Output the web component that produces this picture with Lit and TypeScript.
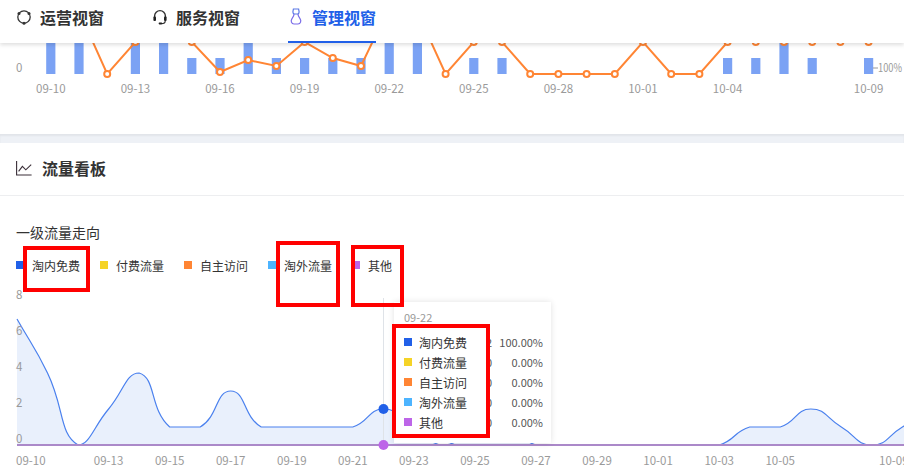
import { LitElement, html, css, svg } from "lit";
import { customElement } from "lit/decorators.js";

const topBars = [2, 2, 0, 2, 2, 1, 1, 2, 1, 1, 1, 1, 2, 2, 0, 1, 1, 0, 0, 0, 0, 0, 0, 0, 1, 1, 2, 1, 0, 1];
const topLine = [-40, 11, 74, 42, -20, 42, 72, 60, 66, 42, 58, 66, 7, 12, 74, 42, 42, 74, 74, 74, 74, 42, 74, 74, 42, 42, 42, 42, 42, 42];
const topLabels: [number, string][] = [[0, "09-10"], [3, "09-13"], [6, "09-16"], [9, "09-19"], [12, "09-22"], [15, "09-25"], [18, "09-28"], [21, "10-01"], [24, "10-04"], [29, "10-09"]];
const tx = (i: number) => 50.8 + 28.2 * i;

const flow = [7, 4, 0, 2, 4, 1, 1, 3, 1, 1, 1, 1, 2, 1, 0, 1, 1, 0, 0, 0, 0, 0, 0, 0, 1, 1, 2, 1, 0, 1, 2];
const fx = (i: number) => 17 + 30.53 * i;
const fy = (v: number) => 445 - 18 * v;
const bottomLabels: [number, string][] = [[3, "09-13"], [5, "09-15"], [7, "09-17"], [9, "09-19"], [11, "09-21"], [13, "09-23"], [15, "09-25"], [17, "09-27"], [19, "09-29"], [21, "10-01"], [23, "10-03"], [25, "10-05"]];

function smoothPath(pts: [number, number][]): string {
  const s = 0.5;
  let d = `M${pts[0][0]} ${pts[0][1]}`;
  const nextCp: [number, number][] = [];
  const prevCp: [number, number][] = [];
  pts.forEach((p, i) => {
    const a = pts[Math.max(i - 1, 0)];
    const b = pts[Math.min(i + 1, pts.length - 1)];
    const vx = b[0] - a[0];
    const vy = b[1] - a[1];
    const lp = Math.hypot(p[0] - a[0], p[1] - a[1]);
    const ln = Math.hypot(b[0] - p[0], b[1] - p[1]);
    const r = lp + ln === 0 ? 0.5 : ln / (lp + ln);
    const clamp = (y: number, o: [number, number]) => Math.max(Math.min(y, Math.max(o[1], p[1])), Math.min(o[1], p[1]));
    nextCp[i] = [p[0] + vx * s * r, clamp(p[1] + vy * s * r, b)];
    prevCp[i] = [p[0] - vx * s * (1 - r), clamp(p[1] - vy * s * (1 - r), a)];
  });
  for (let i = 1; i < pts.length; i++) {
    const c1 = nextCp[i - 1];
    const c2 = prevCp[i];
    d += `C${c1[0].toFixed(1)} ${c1[1].toFixed(1)} ${c2[0].toFixed(1)} ${c2[1].toFixed(1)} ${pts[i][0].toFixed(1)} ${pts[i][1].toFixed(1)}`;
  }
  return d;
}

const legend = [
  { name: "淘内免费", color: "#2160e8", value: "2", pct: "100.00%" },
  { name: "付费流量", color: "#f5d327", value: "0", pct: "0.00%" },
  { name: "自主访问", color: "#ff8534", value: "0", pct: "0.00%" },
  { name: "淘外流量", color: "#4db4ff", value: "0", pct: "0.00%" },
  { name: "其他", color: "#bd65e8", value: "0", pct: "0.00%" },
];

const iconOps = html`<svg class="icon" viewBox="0 0 16 16" fill="none">
  <circle cx="8" cy="8" r="6.2" stroke="#333" stroke-width="1.3"></circle>
  <circle cx="13" cy="4.4" r="1.5" fill="#333"></circle>
  <circle cx="3" cy="4.4" r="1.5" fill="#333"></circle>
  <circle cx="8" cy="14.2" r="1.5" fill="#333"></circle>
</svg>`;
const iconService = html`<svg class="icon" viewBox="0 0 16 16" fill="none">
  <path d="M2.6 9V7a5.4 5.4 0 0 1 10.8 0v2" stroke="#333" stroke-width="1.4"></path>
  <rect x="1.4" y="7.6" width="2.6" height="4.4" rx="1" fill="#222"></rect>
  <rect x="12" y="7.6" width="2.6" height="4.4" rx="1" fill="#222"></rect>
  <path d="M13.2 12c0 1.6-1.4 2.6-3.6 2.6" stroke="#333" stroke-width="1.2"></path>
  <rect x="6.6" y="13.6" width="3.6" height="1.8" rx=".8" fill="#222"></rect>
</svg>`;
const iconManage = html`<svg class="icon tall" viewBox="0 0 16 18" fill="none">
  <path d="M5.4 1h5.2l.5 2.8c.1.9-.4 1.8-1.3 2.2H6.200c-.9-.4-1.400-1.300-1.300-2.200z" stroke="#5a78e6" stroke-width="1.200"></path>
  <path d="M6 6c.2 1.600-.8 3-2 4.600-1.600 2.200-.6 5.400 2 5.400h4c2.600 0 3.600-3.200 2-5.400-1.200-1.600-2.200-3-2-4.600" stroke="#7a6ce8" stroke-width="1.200"></path>
</svg>`;

@customElement("app-root")
export class AppRoot extends LitElement {
  static styles = css`
    :host {
      display: block;
      position: relative;
      width: 904px;
      height: 470px;
      overflow: hidden;
      background: #fff;
      font-family: "Noto Sans CJK SC", "Noto Sans", sans-serif;
      color: #333;
    }
    .nav {
      position: relative;
      z-index: 2;
      height: 43px;
      box-sizing: border-box;
      display: flex;
      gap: 48px;
      padding-left: 16px;
      background: #fff;
      box-shadow: 0 2px 4px rgba(0, 0, 0, 0.13);
    }
    .tab {
      width: 88px;
      height: 43px;
      box-sizing: border-box;
      display: flex;
      align-items: center;
      gap: 8px;
      padding-bottom: 9px;
      font-size: 16px;
      font-weight: 700;
      line-height: 20px;
      white-space: nowrap;
      color: #333;
    }
    .tab.active {
      color: #2160e8;
      border-bottom: 2px solid #2160e8;
      padding-bottom: 7px;
    }
    .icon {
      width: 16px;
      height: 16px;
      flex: none;
    }
    .icon.tall {
      height: 18px;
    }
    svg.chart {
      display: block;
      width: 904px;
    }
    .top {
      height: 91px;
    }
    .axis {
      font-family: "Noto Sans CJK SC", "Noto Sans", sans-serif;
      font-size: 11.5px;
      fill: #9a9a9a;
    }
    .band {
      height: 9px;
      background: #eef1f6;
      box-shadow: inset 0 2px 2px rgba(0, 0, 0, 0.05);
    }
    .head {
      height: 53px;
      box-sizing: border-box;
      border-bottom: 1px solid #edeef0;
      padding: 0 0 3px 16px;
      display: flex;
      align-items: center;
      gap: 10px;
      font-size: 16px;
      font-weight: 700;
    }
    .head svg {
      width: 16px;
      height: 16px;
    }
    .sub {
      margin: 27px 0 0 16px;
      height: 18px;
      line-height: 18px;
      font-size: 14px;
      color: #333;
    }
    .legend {
      display: flex;
      margin: 15px 0 0 16px;
      height: 18px;
      align-items: center;
      font-size: 12px;
    }
    .legend .item {
      display: flex;
      align-items: center;
      gap: 8px;
      padding-right: 20px;
    }
    .sq {
      width: 8px;
      height: 8px;
      flex: none;
    }
    .wrap {
      position: relative;
      height: 185px;
      margin-top: 11px;
    }
    .flowchart {
      height: 185px;
    }
    .tip {
      position: absolute;
      left: 394px;
      top: 17px;
      width: 157px;
      height: 141px;
      box-sizing: border-box;
      padding: 6px 8px 0 10px;
      background: #fff;
      box-shadow: 0 0 6px rgba(0, 0, 0, 0.12);
      font-size: 11px;
    }
    .tip .date {
      height: 18px;
      line-height: 18px;
      color: #999;
      margin-bottom: 6px;
    }
    .tip .row {
      height: 20px;
      display: flex;
      align-items: center;
      color: #555;
    }
    .tip .sq {
      margin-right: 7px;
    }
    .tip .name {
      width: 48px;
      font-size: 12px;
      color: #333;
    }
    .tip .val {
      width: 25px;
      text-align: right;
    }
    .tip .pct {
      flex: 1;
      text-align: right;
    }
    .mark {
      position: absolute;
      z-index: 3;
      box-sizing: border-box;
      border: 4px solid #ff0000;
    }
    .m1 { left: 23px; top: 246px; width: 67px; height: 46px; }
    .m2 { left: 276px; top: 241px; width: 64px; height: 66px; }
    .m3 { left: 351px; top: 245px; width: 53px; height: 62px; }
    .m4 { left: 392px; top: 324px; width: 98px; height: 114px; }
  `;

  private topChart() {
    return html`<svg class="chart top" viewBox="0 43 904 91" height="91">
      ${topBars.map((b, i) =>
        b ? svg`<rect x=${tx(i) - 4.6} y=${b === 2 ? 30 : 58} width="9.2" height=${b === 2 ? 44 : 16} fill="#7ba2f4"></rect>` : null
      )}
      <polyline points=${topLine.map((y, i) => `${tx(i)},${y}`).join(" ")} fill="none" stroke="#ff8534" stroke-width="2"></polyline>
      ${topLine.map((y, i) => svg`<circle cx=${tx(i)} cy=${y} r="3" fill="#fff" stroke="#ff8534" stroke-width="2"></circle>`)}
      <text class="axis" x="16" y="72">0</text>
      <line x1="873" x2="878" y1="68" y2="68" stroke="#999"></line>
      <text class="axis" x="878" y="72" textLength="24" lengthAdjust="spacingAndGlyphs">100%</text>
      ${topLabels.map(([i, t]) => svg`<text class="axis" x=${tx(i)} y="93" text-anchor="middle">${t}</text>`)}
    </svg>`;
  }

  private flowChart() {
    const pts = flow.map((v, i) => [fx(i), fy(v)] as [number, number]);
    const line = smoothPath(pts);
    const area = `${line}L${fx(flow.length - 1)} 445L17 445Z`;
    return html`<svg class="chart flowchart" viewBox="0 285 904 185" height="185">
      <path d=${area} fill="#e9f0fc"></path>
      <path d=${line} fill="none" stroke="#4a80ee" stroke-width="1.2"></path>
      <line x1="17" x2="904" y1="445" y2="445" stroke="#ab89c9" stroke-width="2"></line>
      <line x1="383.5" x2="383.5" y1="298" y2="445" stroke="#dfe3e8"></line>
      <circle cx="383.5" cy="409" r="5" fill="#2160e8"></circle>
      <circle cx="383.5" cy="445" r="5" fill="#bd65e8"></circle>
      ${[8, 6, 4, 2, 0].map((v) => svg`<text class="axis" x="16" y=${fy(v) - 2}>${v}</text>`)}
      <text class="axis" x="16" y="465">09-10</text>
      ${bottomLabels.map(([i, t]) => svg`<text class="axis" x=${fx(i)} y="465" text-anchor="middle">${t}</text>`)}
      <text class="axis" x="879" y="465">10-09</text>
    </svg>`;
  }

  render() {
    return html`
      <nav class="nav">
        <div class="tab">${iconOps}<span>运营视窗</span></div>
        <div class="tab">${iconService}<span>服务视窗</span></div>
        <div class="tab active">${iconManage}<span>管理视窗</span></div>
      </nav>
      ${this.topChart()}
      <div class="band"></div>
      <div class="head">
        <svg viewBox="0 0 16 16" fill="none" stroke="#3a2f38" stroke-width="1.1">
          <path d="M.6 1v14h15"></path>
          <path d="M2.6 11.4 6.400 6.400l3.400 3.400 5.400-5.200"></path>
        </svg>
        <span>流量看板</span>
      </div>
      <div class="sub">一级流量走向</div>
      <div class="legend">
        ${legend.map(
          (l) => html`<div class="item"><i class="sq" style="background:${l.color}"></i><span>${l.name}</span></div>`
        )}
      </div>
      <div class="wrap">
        ${this.flowChart()}
        <div class="tip">
          <div class="date">09-22</div>
          ${legend.map(
            (l) => html`<div class="row">
              <i class="sq" style="background:${l.color}"></i>
              <span class="name">${l.name}</span>
              <span class="val">${l.value}</span>
              <span class="pct">${l.pct}</span>
            </div>`
          )}
        </div>
      </div>
      <div class="mark m1"></div>
      <div class="mark m2"></div>
      <div class="mark m3"></div>
      <div class="mark m4"></div>
    `;
  }
}
